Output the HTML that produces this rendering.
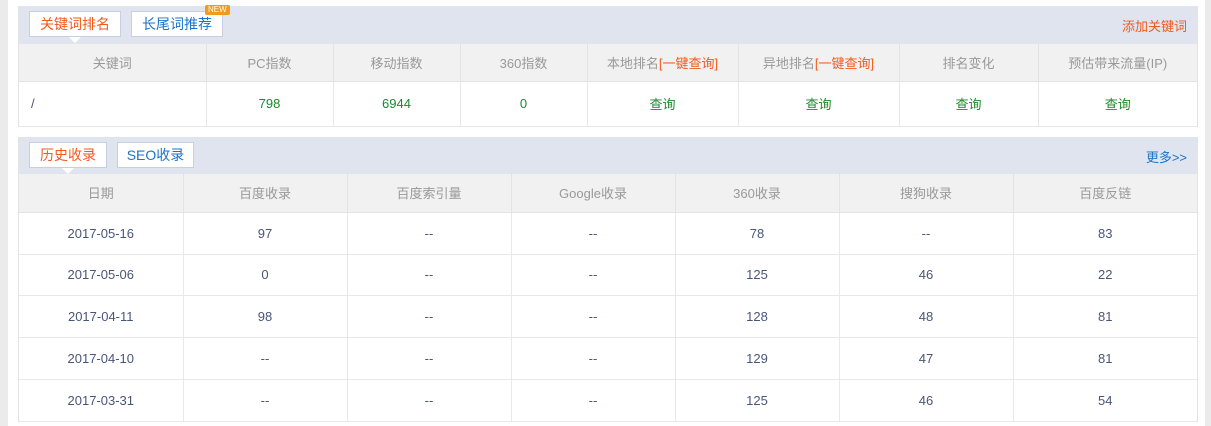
<!DOCTYPE html>
<html><head><meta charset="utf-8"><style>
*{margin:0;padding:0;box-sizing:border-box}
body{width:1211px;height:426px;background:#fff;position:relative;overflow:hidden;font-family:"Liberation Sans","Noto Sans CJK SC",sans-serif;font-size:13px}
.ls{position:absolute;left:0;top:0;width:8px;height:426px;background:#ebebeb}
.rs{position:absolute;left:1205px;top:0;width:6px;height:426px;background:#ebebeb}
.panel{position:absolute;left:18px;width:1180px;border:1px solid #e3e3e3;border-top:0;background:#fff}
.hd{position:relative;height:38px;background:#e0e4ef}
.tab{position:absolute;top:5px;height:26px;line-height:24px;background:#fff;border:1px solid #c8cfe0;text-align:center;font-size:14px;color:#1a73c8}
.tab.on{color:#f05a1e}
.tab.on:after{content:"";position:absolute;left:50%;margin-left:-6px;bottom:-7px;border:6px solid transparent;border-top:6px solid #fff;border-bottom:0}
.new{position:absolute;left:186px;top:-1px;background:#f39a1e;color:#fff;font-size:8px;line-height:10px;padding:0 3px;border-radius:2px}
.hr{position:absolute;right:10px;top:10px;font-size:13px}
table{border-collapse:collapse;width:100%;table-layout:fixed}
th{background:#f1f1f1;color:#999;font-weight:normal;border-left:1px solid #e3e3e3;border-bottom:1px solid #e3e3e3}
td{text-align:center;border-left:1px solid #e8e8e8;border-bottom:1px solid #e8e8e8;color:#4a5578}
th:first-child,td:first-child{border-left:0}
.g{color:#1a8a2a}
.o{color:#f05a1e}
</style></head><body>
<div class="ls"></div><div class="rs"></div>
<div class="panel" style="top:6px;height:121px">
 <div class="hd">
  <div class="tab on" style="left:10px;width:92px">关键词排名</div>
  <div class="tab" style="left:112px;width:92px">长尾词推荐</div>
  <div class="new">NEW</div>
  <div class="hr o">添加关键词</div>
 </div>
 <table>
  <colgroup><col style="width:187px"><col style="width:127px"><col style="width:127px"><col style="width:127px"><col style="width:151px"><col style="width:161px"><col style="width:139px"><col></colgroup>
  <tr style="height:37px"><th>关键词</th><th>PC指数</th><th>移动指数</th><th>360指数</th><th>本地排名<span class="o">[一键查询]</span></th><th>异地排名<span class="o">[一键查询]</span></th><th>排名变化</th><th>预估带来流量(IP)</th></tr>
  <tr style="height:45px"><td style="text-align:left;padding-left:12px">/</td><td class="g">798</td><td class="g">6944</td><td class="g">0</td><td class="g">查询</td><td class="g">查询</td><td class="g">查询</td><td class="g">查询</td></tr>
 </table>
</div>
<div class="panel" style="top:137px;height:285px">
 <div class="hd" style="height:37px">
  <div class="tab on" style="left:10px;width:78px">历史收录</div>
  <div class="tab" style="left:98px;width:77px">SEO收录</div>
  <div class="hr" style="color:#1a73c8">更多&gt;&gt;</div>
 </div>
 <table>
  <colgroup><col style="width:164px"><col style="width:164px"><col style="width:164px"><col style="width:164px"><col style="width:164px"><col style="width:174px"><col></colgroup>
  <tr style="height:38px"><th>日期</th><th>百度收录</th><th>百度索引量</th><th>Google收录</th><th>360收录</th><th>搜狗收录</th><th>百度反链</th></tr>
  <tr style="height:42px"><td>2017-05-16</td><td>97</td><td>--</td><td>--</td><td>78</td><td>--</td><td>83</td></tr>
  <tr style="height:41px"><td>2017-05-06</td><td>0</td><td>--</td><td>--</td><td>125</td><td>46</td><td>22</td></tr>
  <tr style="height:42px"><td>2017-04-11</td><td>98</td><td>--</td><td>--</td><td>128</td><td>48</td><td>81</td></tr>
  <tr style="height:42px"><td>2017-04-10</td><td>--</td><td>--</td><td>--</td><td>129</td><td>47</td><td>81</td></tr>
  <tr style="height:42px"><td>2017-03-31</td><td>--</td><td>--</td><td>--</td><td>125</td><td>46</td><td>54</td></tr>
 </table>
</div>
</body></html>
